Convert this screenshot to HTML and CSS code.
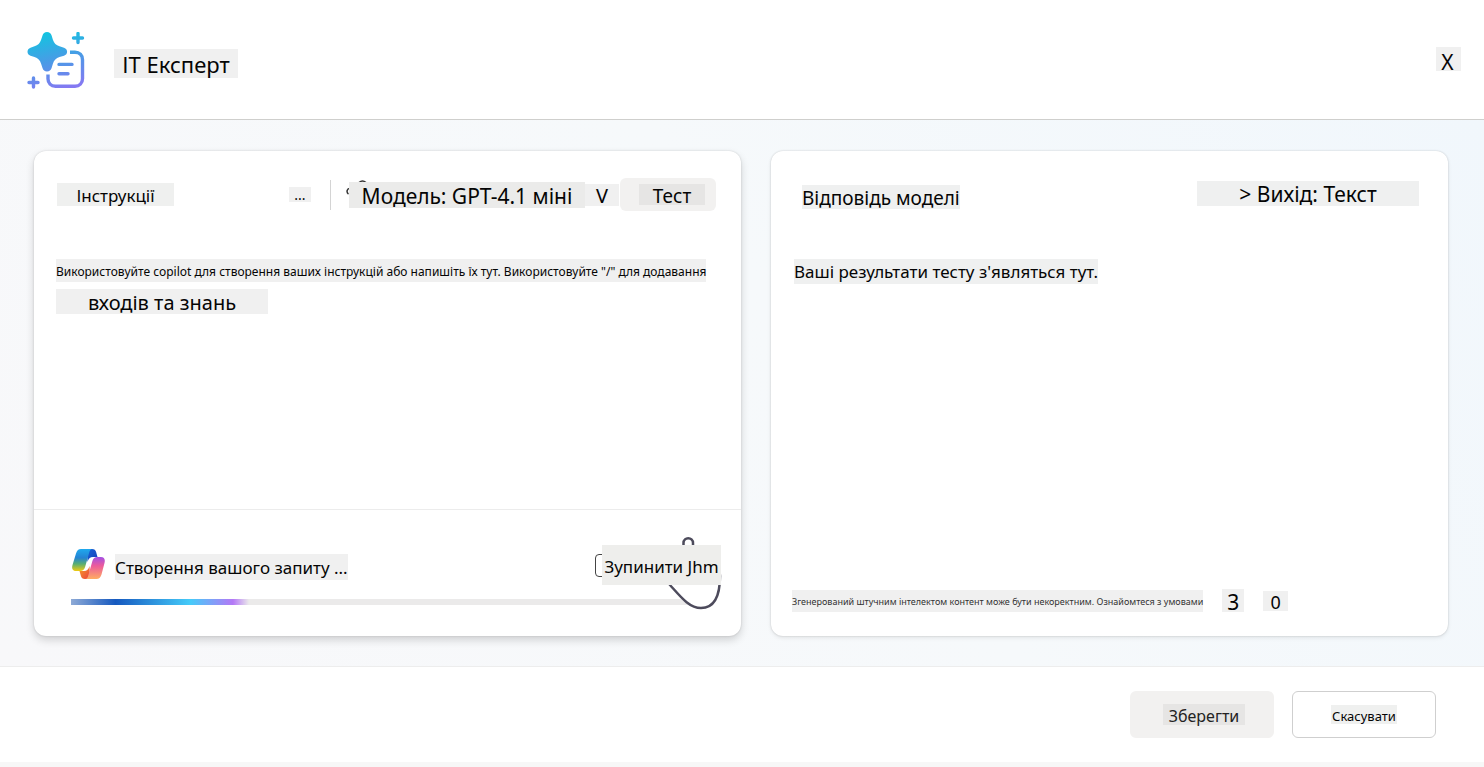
FILE: index.html
```html
<!DOCTYPE html>
<html lang="uk">
<head>
<meta charset="utf-8">
<title>ІТ Експерт</title>
<meta name="viewport" content="width=device-width, initial-scale=1">
<link rel="stylesheet" href="styles.css">
</head>
<body>
<header class="topbar">
  <svg class="logo" viewBox="0 0 58 58" fill="none" aria-hidden="true">
    <defs>
      <linearGradient id="brand" gradientUnits="userSpaceOnUse" x1="20" y1="0" x2="34" y2="57">
        <stop offset="0" stop-color="#12c4e0"/><stop offset=".5" stop-color="#4a9be6"/><stop offset="1" stop-color="#8479f2"/>
      </linearGradient>
    </defs>
    <path fill="url(#brand)" d="M20 0c2.300 0 4 1.400 4.600 3.400l1.300 4.300c1.100 3.500 3.200 5.500 6.600 6.600l4.500 1.400c2 .7 3.100 2.200 3.100 4s-1.100 3.300-3.100 4l-4.500 1.400c-3.400 1.100-5.500 3.200-6.600 6.600l-1.300 4.400c-.7 2.100-2.300 3.500-4.600 3.500s-3.900-1.400-4.500-3.500l-1.400-4.400c-1.100-3.400-3.100-5.500-6.600-6.600l-4-1.400c-2-.7-3-2.200-3-4s1-3.300 3-4l4-1.400c3.500-1.100 5.500-3.100 6.600-6.600l1.400-4.300C16.100 1.400 17.700 0 20 0z"/>
    <path stroke="url(#brand)" stroke-width="3.400" d="M43 20.200h5c4.400 0 7.500 3.100 7.500 7.500v19c0 4.400-3.100 7.500-7.500 7.500H28.500c-4.600 0-7.500-3.100-7.500-7.500V42.500"/>
    <path stroke="url(#brand)" stroke-width="3.400" stroke-linecap="round" d="M32 32.400h13M32 41.700h9M46.500 6h9M51 1.500v9M2 50.500h9M6.500 46v9"/>
  </svg>
  <h1 class="mark title">ІТ Експерт</h1>
  <button class="mark close" type="button" aria-label="Закрити">X</button>
</header>

<main class="workspace">
  <section class="panel panel-edit">
    <div class="panel-head">
      <h2 class="mark heading">Інструкції</h2>
      <button class="mark more" type="button" aria-label="Більше">...</button>
      <div class="model">
        <svg class="model-icon" viewBox="0 0 24 24" fill="none" stroke="#333" stroke-width="1.500" aria-hidden="true">
          <path d="M6 8.500c-3-.5-4 4-1.500 5.500M15 2.500c2-1.600 5-1.600 7 0"/>
        </svg>
        <button class="mark model-name" type="button">Модель: GPT-4.1 міні</button>
        <button class="mark model-arrow" type="button" aria-label="Вибрати модель">V</button>
      </div>
      <button class="test" type="button"><span class="mark test-label">Тест</span></button>
    </div>
    <p class="prompt"><span class="mark prompt-first">Використовуйте copilot для створення ваших інструкцій або напишіть їх тут. Використовуйте "/" для додавання</span> <span class="mark prompt-second">входів та знань</span></p>
    <div class="generating">
      <div class="status">
        <svg class="copilot" viewBox="0 0 34 32" aria-hidden="true">
          <defs>
            <linearGradient id="cpA" x1="0" y1="0" x2="0" y2="1"><stop offset="0" stop-color="#1fa9ee"/><stop offset=".4" stop-color="#2483d3"/><stop offset=".68" stop-color="#59ae72"/><stop offset="1" stop-color="#f0cb10"/></linearGradient>
            <linearGradient id="cpB" x1="0" y1="0" x2="0" y2="1"><stop offset="0" stop-color="#a34fe4"/><stop offset=".4" stop-color="#ec5b9b"/><stop offset="1" stop-color="#ffad62"/></linearGradient>
            <linearGradient id="cpC" x1="0" y1="0" x2="1" y2="1"><stop offset="0" stop-color="#1764d8"/><stop offset="1" stop-color="#173fb8"/></linearGradient>
            <linearGradient id="cpD" x1="0" y1="0" x2="1" y2="1"><stop offset="0" stop-color="#f8a025"/><stop offset="1" stop-color="#e9403f"/></linearGradient>
          </defs>
          <path fill="url(#cpC)" d="M16 0h5c2.500 0 3.500 1 4.100 3l1.400 5h-4.500c-3 0-4.500 1.500-5.500 5z"/>
          <path fill="url(#cpD)" d="M19 30h-5c-2.500 0-3.500-1-4.100-3l-1.400-5H13c3 0 4.500-1.500 5.500-5z"/>
          <path fill="url(#cpA)" d="M10 0h11.500c-2 0-2.700 1.500-3.400 4l-4 14c-.8 2.800-2.300 4-5 4H5C1.500 22 .5 19.500 1.500 16L5 4.500C6 1.300 7.500 0 10 0z"/>
          <path fill="url(#cpB)" d="M25.500 30H14c2 0 2.700-1.500 3.400-4l4-14c.8-2.800 2.300-4 5-4h3.500c3.500 0 4.500 2.500 3.600 6L30.500 25.500C29.500 28.700 28 30 25.500 30z"/>
        </svg>
        <span class="mark status-text" id="status-text">Створення вашого запиту ...</span>
        <button class="stop" type="button"><span class="mark stop-label">Зупинити Jhm</span></button>
        <svg class="cursor" viewBox="0 0 54 76" aria-hidden="true">
          <path fill="#fff" stroke="#4d4b5c" stroke-width="2.500" d="M15.500 11V7c0-6.500 9.500-6.500 9.500 0v16l21 6c5 1 6 6 6 11 0 18-4 32-19 32C21 72 12 60 2 49z"/>
        </svg>
      </div>
      <div class="progress" role="progressbar" aria-labelledby="status-text"><div class="progress-value"></div></div>
    </div>
  </section>

  <section class="panel panel-result">
    <div class="panel-head">
      <h2 class="mark result-title">Відповідь моделі</h2>
      <button class="mark output" type="button">&gt; Вихід: Текст</button>
    </div>
    <p class="result"><span class="mark result-text">Ваші результати тесту з'являться тут.</span></p>
    <div class="notice">
      <span class="mark notice-text">Згенерований штучним інтелектом контент може бути некоректним. Ознайомтеся з умовами</span>
      <span class="mark digit">3</span>
      <span class="mark digit zero">0</span>
    </div>
  </section>
</main>

<footer class="actions">
  <button class="action save" type="button"><span class="mark save-label">Зберегти</span></button>
  <button class="action cancel" type="button"><span class="mark cancel-label">Скасувати</span></button>
</footer>
<div class="base-strip"></div>
</body>
</html>
```
FILE: styles.css
```css
* { box-sizing: border-box; }
body {
  margin: 0;
  min-height: 100vh;
  display: flex;
  flex-direction: column;
  background: #fff;
  color: #050505;
  font-family: "Noto Sans", sans-serif;
}
h1, h2, p { margin: 0; font-weight: 400; }
button {
  margin: 0;
  padding: 0;
  border: 0;
  background: none;
  color: inherit;
  font-family: inherit;
  cursor: pointer;
}
.mark {
  display: flex;
  align-items: center;
  justify-content: center;
  flex: none;
  padding-top: 2px;
  background: #f0f0f0;
  white-space: nowrap;
}

/* Header */
.topbar {
  display: flex;
  align-items: center;
  height: 120px;
  padding: 7px 23px 0 27px;
  border-bottom: 1px solid #cfcfcd;
}
.logo { width: 58px; height: 58px; margin-bottom: 5px; flex: none; }
.title { width: 124px; height: 29px; margin-left: 29px; font-size: 22px; line-height: 29px; }
.close { width: 25px; height: 24px; margin-left: auto; margin-bottom: 8px; padding: 5px 2px 0 0; font-size: 21px; }

/* Panels */
.workspace {
  flex: 1;
  display: grid;
  grid-template-columns: 707fr 677fr;
  gap: 30px;
  padding: 31px 36px 30px 34px;
  background: linear-gradient(235deg, #f1f7fc 0%, #f6f9fb 45%, #f8f8fa 100%);
}
.panel {
  display: flex;
  flex-direction: column;
  min-width: 0;
  border-radius: 12px;
  background: #fff;
  box-shadow: 0 0 2px rgba(0, 0, 0, .18), 0 2px 4px rgba(0, 0, 0, .08);
}
.panel-edit { box-shadow: 0 0 2px rgba(0, 0, 0, .16), 0 4px 9px rgba(0, 0, 0, .16); }
.panel-head { display: flex; align-items: center; height: 33px; margin-top: 27px; }
.panel-edit .panel-head { padding: 0 25px 0 23px; }
.heading { width: 117px; height: 23px; background: #eff0ef; font-size: 17px; }
.more { width: 22px; height: 15px; margin-left: auto; padding: 0 0 0 0; font-size: 14px; line-height: 15px; }
.model {
  position: relative;
  display: flex;
  align-items: center;
  height: 30px;
  margin: 0 1px 0 19px;
  padding-left: 18px;
  border-left: 1px solid #d4d4d4;
}
.model-icon { position: absolute; left: 13px; top: 0; width: 24px; height: 24px; }
.model-name { position: relative; width: 236px; height: 26px; background: #ebebea; font-size: 21px; }
.model-arrow { width: 34px; height: 22px; font-size: 20px; }
.test { display: flex; padding: 6px 11px 6px 19px; border-radius: 6px; background: #f2f1f0; }
.test-label { width: 66px; height: 21px; background: #e6e5e4; font-size: 19px; }

.prompt {
  display: flex;
  flex-direction: column;
  align-items: flex-start;
  gap: 7px;
  flex: 1;
  margin-top: 48px;
  padding: 0 22px;
}
.prompt-first { height: 23px; font-size: 12px; }
.prompt-second { width: 212px; height: 25px; font-size: 20px; }

.generating { padding: 35px 20px 31px 37px; border-top: 1px solid #ececec; }
.status { position: relative; display: flex; align-items: center; height: 40px; }
.copilot { width: 34px; height: 32px; }
.status-text { height: 26px; margin: 3px 0 0 10px; font-size: 17px; }
.stop { position: relative; z-index: 2; display: flex; margin-left: auto; padding-left: 7px; }
.stop::before {
  content: "";
  position: absolute;
  left: 0;
  top: 9px;
  width: 20px;
  height: 21px;
  border: 1px solid #444;
  border-radius: 4px;
}
.stop-label { position: relative; width: 119px; height: 40px; background: #eeeeec; font-size: 17px; }
.cursor { position: absolute; z-index: 1; right: -1px; top: -9px; width: 54px; height: 76px; }
.progress { height: 6px; margin: 14px 15px 0 0; background: #ebeaea; }
.progress-value {
  width: 28%;
  height: 100%;
  background: linear-gradient(90deg, #8eaad6 0%, #1659bf 25%, #45cbf9 67%, #b478f6 91%, #ebeaea 100%);
}

.panel-result .panel-head { padding: 0 29px 0 31px; }
.result-title { height: 24px; margin-top: 5px; font-size: 19px; background: #eff0f0; }
.output { width: 222px; height: 25px; margin: 0 0 3px auto; background: #eff0f0; font-size: 21px; }
.result { display: flex; flex: 1; align-items: flex-start; margin-top: 48px; padding: 0 23px; }
.result-text { height: 25px; padding-top: 0; font-size: 17px; background: #eff0f0; }
.notice { display: flex; align-items: center; padding: 0 21px 24px; }
.notice-text { height: 22px; font-size: 9px; color: #333; }
.digit { width: 22px; height: 23px; margin-left: 19px; font-size: 21px; }
.zero { width: 25px; height: 20px; margin-left: 19px; font-size: 18px; }

/* Footer */
.actions {
  display: flex;
  justify-content: flex-end;
  gap: 18px;
  padding: 24px 48px;
  border-top: 1px solid #ededed;
}
.action { display: flex; align-items: center; justify-content: center; width: 144px; height: 47px; border-radius: 6px; }
.save { padding-left: 4px; background: #f2f1f0; }
.save-label { width: 82px; height: 21px; background: #e6e5e4; color: #222; font-size: 16px; }
.cancel { border: 1px solid #cfcfcf; background: #fff; }
.cancel-label { width: 66px; height: 19px; background: #eff0ef; font-size: 13px; }
.base-strip { height: 5px; background: #f7f7f7; }
```
